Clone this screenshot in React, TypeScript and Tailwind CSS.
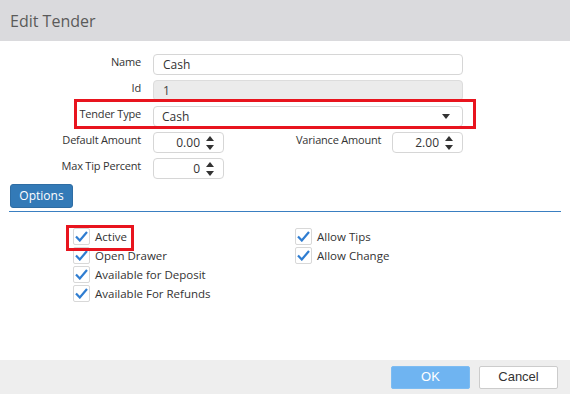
import React from "react";

const font = "font-['Open_Sans',_'Noto_Sans',_sans-serif]";

function Spinner() {
  return (
    <div className="flex flex-col items-center justify-center gap-[4px] pr-[9px] pl-[6px]">
      <svg width="8" height="5" viewBox="0 0 8 5">
        <path d="M0 5 L4 0 L8 5 Z" fill="#333" />
      </svg>
      <svg width="8" height="5" viewBox="0 0 8 5">
        <path d="M0 0 L8 0 L4 5 Z" fill="#333" />
      </svg>
    </div>
  );
}

function NumberBox({ value }: { value: string }) {
  return (
    <div className="flex h-[21px] w-[71px] items-center rounded-[4px] border border-[#d6d6d6] bg-white">
      <span className="flex-1 text-right text-[12px] text-[#333]">{value}</span>
      <Spinner />
    </div>
  );
}

function Row({ label, children }: { label: string; children: React.ReactNode }) {
  return (
    <div className="flex h-[21px] items-center">
      <div className="w-[141px] whitespace-nowrap pb-[5px] text-right text-[11px] tracking-[-0.2px] text-[#333]">{label}</div>
      <div className="ml-[12px] flex-1">{children}</div>
    </div>
  );
}

function Check({ label }: { label: string }) {
  return (
    <div className="flex h-[19px] items-center gap-[5px]">
      <div className="flex h-[17px] w-[17px] items-center justify-center rounded-[2px] border border-[#d8d8d8] bg-white">
        <svg width="13" height="11" viewBox="0 0 13 11">
          <path d="M1 5.5 L4.8 9.5 L12 1" fill="none" stroke="#2f7dd1" strokeWidth="2.2" />
        </svg>
      </div>
      <span className="text-[11.5px] text-[#333]">{label}</span>
    </div>
  );
}

export default function App() {
  return (
    <div className={`flex h-[394px] w-[570px] flex-col bg-white ${font}`}>
      <header className="flex h-[41px] items-center bg-[#dadadd] px-[10px] text-[16px] text-[#5a5a5a]">
        Edit Tender
      </header>

      <main className="relative flex-1">
        {/* annotation boxes */}
        <div className="absolute left-[74px] top-[58px] h-[30px] w-[402px] border-[3px] border-[#e8141e]" />
        <div className="absolute left-[66px] top-[184px] h-[26px] w-[68px] border-[3px] border-[#e8141e]" />

        <div className="flex flex-col gap-[5px] pt-[13px] pr-[107px]">
          <Row label="Name">
            <div className="flex h-[21px] items-center rounded-[4px] border border-[#d6d6d6] bg-white px-[9px] text-[12px] text-[#333]">
              Cash
            </div>
          </Row>
          <Row label="Id">
            <div className="flex h-[21px] items-center rounded-[4px] border border-[#dcdcdc] bg-[#ebebeb] px-[9px] text-[12px] text-[#444]">
              1
            </div>
          </Row>
          <Row label="Tender Type">
            <div className="flex h-[21px] items-center justify-between rounded-[4px] border border-[#d6d6d6] bg-white pl-[8px] pr-[12px] text-[12px] text-[#333]">
              <span>Cash</span>
              <svg width="8" height="5" viewBox="0 0 8 5">
                <path d="M0 0 L8 0 L4 5 Z" fill="#333" />
              </svg>
            </div>
          </Row>
          <Row label="Default Amount">
            <div className="flex items-center">
              <NumberBox value="0.00" />
              <span className="ml-[72px] w-[84px] whitespace-nowrap pb-[5px] text-[11px] tracking-[-0.2px] text-[#333]">Variance Amount</span>
              <div className="ml-[12px]">
                <NumberBox value="2.00" />
              </div>
            </div>
          </Row>
          <Row label="Max Tip Percent">
            <NumberBox value="0" />
          </Row>
        </div>

        <div className="mx-[9px] mt-[3px] border-b border-[#3a7fc1]">
          <button className="mb-[3px] ml-[1px] h-[24px] w-[63px] rounded-[3px] border border-[#2e6da4] bg-[#337ab7] text-[12px] text-white">
            Options
          </button>
        </div>

        <div className="flex pt-[15px] pl-[73px]">
          <div className="flex w-[222px] flex-col">
            <Check label="Active" />
            <Check label="Open Drawer" />
            <Check label="Available for Deposit" />
            <Check label="Available For Refunds" />
          </div>
          <div className="flex flex-col">
            <Check label="Allow Tips" />
            <Check label="Allow Change" />
          </div>
        </div>
      </main>

      <footer className="flex h-[34px] items-center justify-end gap-[9px] bg-[#eeeeee] pr-[12px] font-['Liberation_Sans',_Arial,_sans-serif]">
        <button className="h-[23px] w-[79px] rounded-[2px] border border-[#7dbcf2] bg-[#6fb4f1] text-[13px] text-white">
          OK
        </button>
        <button className="h-[23px] w-[79px] rounded-[2px] border border-[#cccccc] bg-white text-[13px] text-[#333]">
          Cancel
        </button>
      </footer>
    </div>
  );
}
